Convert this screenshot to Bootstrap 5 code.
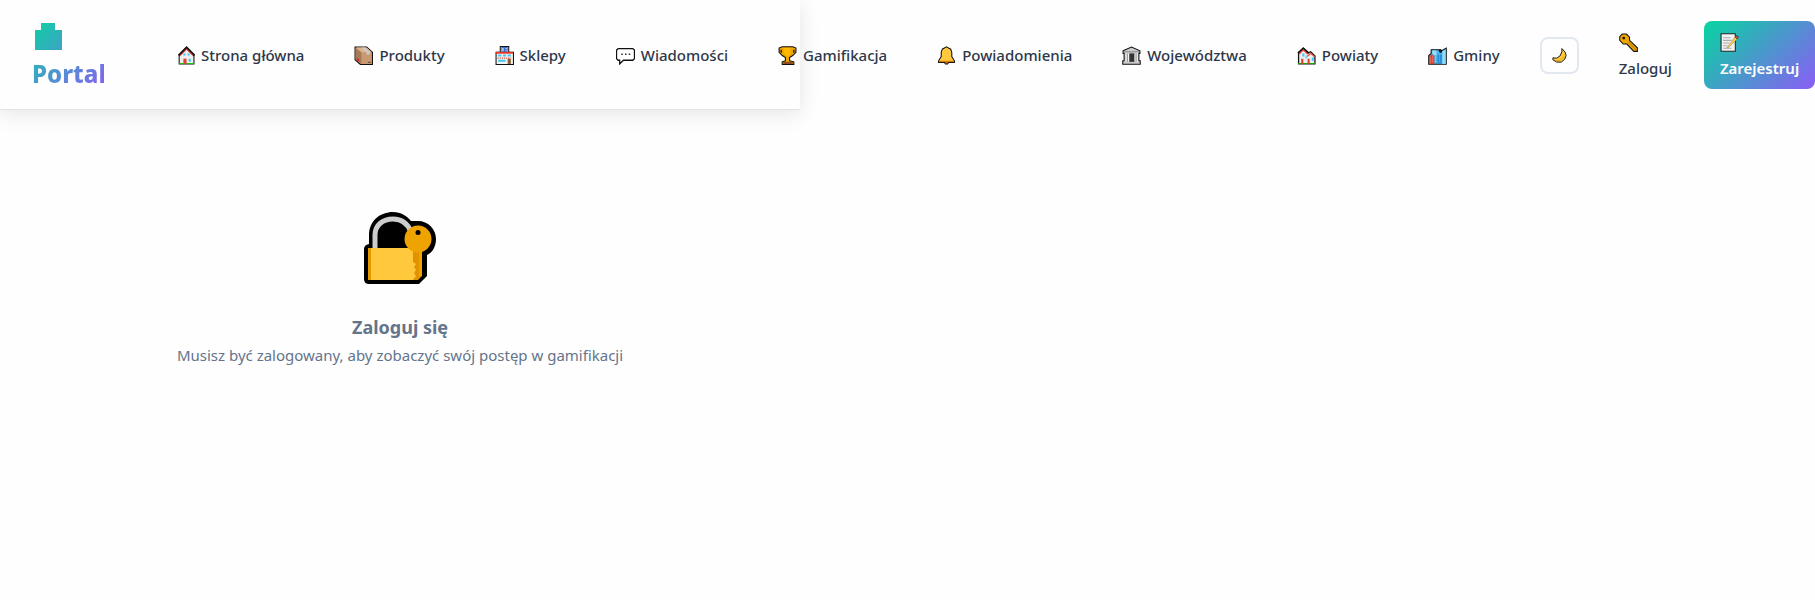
<!DOCTYPE html>
<html lang="pl">
<head>
<meta charset="utf-8">
<meta name="viewport" content="width=device-width, initial-scale=1">
<title>Portal – Gamifikacja</title>
<link rel="stylesheet" href="https://cdn.jsdelivr.net/npm/bootstrap@5.3.0/dist/css/bootstrap.min.css">
<style>
  :root { --mint: #06d6a0; --violet: #8b5cf6; --ink: #2d3748; --muted: #64748b; --line: #e2e8f0; }
  body { font-family: "Noto Sans", sans-serif; font-size: 15px; line-height: 26px; color: var(--ink); background: #fefefe; overflow-x: hidden; }
  .shell { max-width: 800px; }
  .site-header { padding: 17px 0 16px 32px; background: #fefefe; border-bottom: 1px solid rgba(0,0,0,.1); box-shadow: 0 4px 20px rgba(0,0,0,.1); }
  .site-header .btn, .site-links .nav-link { font-size: 15px; line-height: 26px; font-weight: 500; color: var(--ink); white-space: nowrap; }
  .brand { width: 72px; font-size: 24px; line-height: 38px; font-weight: 800; text-decoration: none; color: transparent; background: linear-gradient(135deg, var(--mint), var(--violet)); -webkit-background-clip: text; background-clip: text; }
  .brand-mark { display: block; width: 72px; height: 38px; }
  .site-links { margin-left: 56px; gap: 18px; }
  .site-links .nav-link { display: flex; align-items: center; gap: 6px; padding: 8px 16px; }
  .ico { width: 19px; height: 19px; flex: none; display: block; }
  .site-header .theme-toggle { width: 39px; height: 37px; padding: 0; border: 2px solid var(--line); border-radius: 8px; }
  .theme-toggle .ico { width: 17px; height: 17px; }
  .site-header .auth { padding: 8px 16px; border: 0; border-radius: 8px; text-align: left; }
  .auth .ico { margin: 4px 0 3px; }
  .site-header .auth-primary { color: #fff; font-weight: 600; background: linear-gradient(135deg, var(--mint), var(--violet)); }
  .gate { padding: 102px 32px 64px; color: var(--muted); }
  .gate svg { width: 72px; height: 72px; }
  .gate h1 { font-size: 18px; line-height: 30px; font-weight: 700; margin: 28px 0 0; }
</style>
</head>
<body>
<div class="shell">
  <header class="site-header d-flex align-items-center">
    <a class="brand d-block flex-shrink-0" href="#">
      <svg class="brand-mark" viewBox="0 0 72 38" aria-hidden="true"><defs><linearGradient id="bg" gradientUnits="userSpaceOnUse" x1="0" y1="0" x2="74" y2="74"><stop stop-color="#06d6a0"/><stop offset="1" stop-color="#8b5cf6"/></linearGradient></defs><path fill="url(#bg)" d="M3 13H9V6H23V13H30V33H3z"/></svg>
      Portal</a>
    <ul class="nav site-links flex-nowrap flex-shrink-0">
      <li class="nav-item"><a class="nav-link" href="#"><svg class="ico" viewBox="0 0 18 18"><path d="M3 17V9L10 2L17 9V17z" fill="#eee" stroke="#111"/><path d="M2.500 9L10 1.500L17.500 9" fill="none" stroke="#111" stroke-width="2"/><path d="M4 9L10 3L16 9" fill="none" stroke="#e74835"/><path d="M7 7h2v2H7zM11 7h2v2h-2zM12 12h2v3h-2z" fill="#3ec8f8"/><path d="M7 12h3v5H7z" fill="#e0402c"/><path d="M3 16h4v1H3zM10 16h7v1h-7z" fill="#16c60c"/></svg><span>Strona główna</span></a></li>
      <li class="nav-item"><a class="nav-link" href="#"><svg class="ico" viewBox="0 0 18 18"><path d="M1 1H12L17.500 6V17.500H6L1 13z" fill="#c99a72" stroke="#111"/><path d="M2 1.500H12L17 6H7z" fill="#e0b48e"/><path d="M1.500 2L7 6V17L1.500 12.500z" fill="#a87b58"/><path d="M7 1.500h3L15 6v2h-3V6z" fill="#c8cdd3"/><path d="M3 11l2 2v2l-2-2z" fill="#e81224"/><path d="M13 15h3v1h-3z" fill="#6b4930"/></svg><span>Produkty</span></a></li>
      <li class="nav-item"><a class="nav-link" href="#"><svg class="ico" viewBox="0 0 18 18"><path d="M1 17.500V6H5V.5H13V6H17.500V17.500z" fill="#f2f2f2" stroke="#111"/><path d="M6 1h6v5H6z" fill="#3268cf"/><path d="M7 2h1v3H7zM10 2h1v1h-1zM10 4h1v1h-1z" fill="#fff"/><path d="M1 5.500h16v1.800H1z" fill="#e83424"/><path d="M3 8h3v2H3zM7.500 8h3v2h-3zM12 8h3v2h-3zM3 13h7v2H3z" fill="#3ec8f8"/><path d="M2.500 11.500H15" stroke="#e74835" stroke-dasharray="1 1"/><path d="M12 12h3v5h-3z" fill="#8b5a32"/></svg><span>Sklepy</span></a></li>
      <li class="nav-item"><a class="nav-link" href="#"><svg class="ico" viewBox="0 0 18 18"><path d="M2 2.500H16L17.500 4V12L16 13.500H7L3.500 17V13.500H2L.5 12V4z" fill="#fff" stroke="#111" stroke-width="1.200"/><path d="M5 7h1.500v1.500H5zM8.500 7H10v1.500H8.500zM12 7h1.500v1.500H12z" fill="#333"/></svg><span>Wiadomości</span></a></li>
      <li class="nav-item"><a class="nav-link" href="#"><svg class="ico" viewBox="0 0 18 18"><path d="M4 .8H14L17 2V6L14 9L11 11V14L15 15V17.500H4V15L7 14V11L4 9L1 6V2z" fill="#eea600" stroke="#111"/><path d="M3 3.500v3M15 3.500v3" stroke="#111" stroke-width="1.200"/><path d="M5.500 2h6v6l-2 2-4-3z" fill="#ffb900"/><path d="M5 15h9v2H5z" fill="#8e4a20"/></svg><span>Gamifikacja</span></a></li>
      <li class="nav-item"><a class="nav-link" href="#"><svg class="ico" viewBox="0 0 18 18"><path d="M9 .8L13 3L14 6V10L16.500 14V15.500H11L10 17H8L7 15.500H1.500V14L4 10V6L5 3z" fill="#ffc83d" stroke="#111"/><path d="M2 14h14v1.200H2z" fill="#d67d00"/><path d="M7.500 15.500h3V17h-3z" fill="#7a2e1c"/></svg><span>Powiadomienia</span></a></li>
      <li class="nav-item"><a class="nav-link" href="#"><svg class="ico" viewBox="0 0 18 18"><path d="M1 4.500L9 1L17 4.500V7H16V14H17.300V17.300H.7V14H2V7H1z" fill="#ccc" stroke="#111"/><path d="M4 7.500h10V15H4z" fill="#999"/><path d="M7 7h5v8H7z" fill="#333"/><path d="M4 7v8M6.200 7v8M12.300 7v8M14.500 7v8" stroke="#f2f2f2"/><path d="M2 5.500h14" stroke="#888"/></svg><span>Województwa</span></a></li>
      <li class="nav-item"><a class="nav-link" href="#"><svg class="ico" viewBox="0 0 18 18"><path d="M1.500 17V6.500L6 2L11 6.500L13 5.500L17 9.500V17z" fill="#eee" stroke="#111" stroke-width="1.200"/><path d="M1 7L6 2.500L11 7" fill="none" stroke="#111" stroke-width="2"/><path d="M2 7.500L6 3.700L10 7.500M9.500 10L13 7L16.500 10" fill="none" stroke="#e74835" stroke-width="1.200"/><path d="M5 7h2v3H5zM8 9h1v3H8zM14 11h2v3h-2z" fill="#3ec8f8"/><path d="M4 12h2v5H4zM10 12h2v5h-2z" fill="#e0402c"/><path d="M1 16h3v1H1zM6 16h4v1H6zM12 16h5v1h-5z" fill="#16a60c"/></svg><span>Powiaty</span></a></li>
      <li class="nav-item"><a class="nav-link" href="#"><svg class="ico" viewBox="0 0 18 18"><path d="M.7 17.300V9L3 7V3.500H12V5L17.300 2V17.300z" fill="#4ab6ec" stroke="#111"/><path d="M1.200 9.500L4 8L6 10V17H1.200z" fill="#e0402c"/><path d="M4 4.200h4V9L6 8.500 4 7z" fill="#9bdcf7"/><path d="M13.500 5L16.800 3V17H13.500z" fill="#83d3f5"/><path d="M9 8h4v8H9z" fill="#2588d8"/><path d="M10 3.500h3v3h-2z" fill="#111"/><path d="M2.500 11v5M4.500 10v6M15 5v11M7 10v6M11 8v8" stroke="#fff" stroke-width=".8" stroke-dasharray="1 1" opacity=".6"/></svg><span>Gminy</span></a></li>
    </ul>
    <button class="btn theme-toggle d-flex align-items-center justify-content-center flex-shrink-0 ms-4" type="button" aria-label="Tryb ciemny"><svg class="ico" viewBox="0 0 18 18"><path d="M11.500 1.700L15 5.500L16 9L14.500 13L11 16H6L2 13.500V11.500L6 11.800L9.500 9.500L11.500 5z" fill="#ffc83d" stroke="#111" stroke-linejoin="round"/><path d="M5 14.500L10 14L14 10" fill="none" stroke="#e0a019"/></svg></button>
    <a class="btn auth flex-shrink-0 ms-4" href="#"><svg class="ico" viewBox="0 0 18 18"><path d="M3 1H7L10 4V7L17.400 14V17.400H14L7.500 10.500H4L.7 7V3.500z" fill="#eea600" stroke="#111"/><path d="M9 8.500L16 16" stroke="#c67d00"/><circle cx="4.500" cy="4.800" r="1.300" fill="#111"/></svg>Zaloguj</a>
    <a class="btn auth auth-primary flex-shrink-0 ms-3" href="#"><svg class="ico" viewBox="0 0 18 18"><path d="M1 .7H14.500V17.300H1z" fill="#f2f2f2" stroke="#222"/><path d="M3 4.500h7M3 7h8M3 9.500h6M3 12h4M3 14.500h8" stroke="#aaa"/><path d="M6.500 14L14 4L16 2.500L17.500 4L16 6L8.500 13.500z" fill="#ffc83d" stroke="#777" stroke-width=".4"/><path d="M14.500 4L16 2.500L17.500 4L16 5.500z" fill="#e05540" stroke="#222" stroke-width=".7"/></svg>Zarejestruj</a>
  </header>
  <main class="gate text-center">
    <svg viewBox="0 0 72 72" aria-hidden="true"><path d="M5 32V23C5 9 16 0 29 0C37 0 43 4 47 9H54C64 9 72 17 72 27C72 35 68 41 63 43V64L55 72H5Q0 72 0 67V37Q0 33 5 32z"/><path d="M11 37V23C11 13 19 7 29 7C38 7 44 12 47 20" fill="none" stroke="#ccc" stroke-width="5"/><path d="M4 36H50V68H4z" fill="#ffc83d"/><path d="M4 36h3v32H4z" fill="#e59a00"/><path d="M49 36H58V64L54 68H49z" fill="#e09200"/><path d="M49 50l3 2-2 3 2 3-2 3 2 3-3 4z" fill="#ffc83d"/><circle cx="54" cy="27" r="13.500" fill="#eea300"/><path d="M55 38h3v26h-3z" fill="#eea300"/><circle cx="54" cy="20.500" r="2.500"/></svg>
    <h1>Zaloguj się</h1>
    <p class="mb-0">Musisz być zalogowany, aby zobaczyć swój postęp w gamifikacji</p>
  </main>
</div>
<script src="https://cdn.jsdelivr.net/npm/bootstrap@5.3.0/dist/js/bootstrap.bundle.min.js"></script>
</body>
</html>
